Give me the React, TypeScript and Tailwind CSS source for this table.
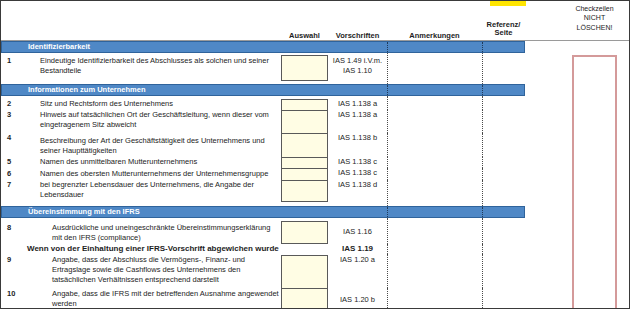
import React from 'react';

type Item = {
  num: string;
  lines: string[];
  ias: string[];
  row: string;
  numPt: string;
  textPt: string;
  iasPt: string;
  box: string;
  indent?: boolean;
};

const rowCols = 'grid grid-cols-[39px_241px_47px_59px_95px_43px]';

const identifizierbarkeit: Item[] = [
  {
    num: '1',
    lines: ['Eindeutige Identifizierbarkeit des Abschlusses als solchen und seiner', 'Bestandteile'],
    ias: ['IAS 1.49 i.V.m.', 'IAS 1.10'],
    row: 'h-[31px]',
    numPt: 'pt-[3px]',
    textPt: 'pt-[3px]',
    iasPt: 'pt-[3px]',
    box: 'mt-[2px] h-[26px] border',
  },
];

const unternehmen: Item[] = [
  {
    num: '2',
    lines: ['Sitz und Rechtsform des Unternehmens'],
    ias: ['IAS 1.138 a'],
    row: 'h-[14px]',
    numPt: 'pt-[3px]',
    textPt: 'pt-[3px]',
    iasPt: 'pt-[3px]',
    box: 'mt-[3px] h-[11px] border-x border-t',
  },
  {
    num: '3',
    lines: ['Hinweis auf tatsächlichen Ort der Geschäftsleitung, wenn dieser vom', 'eingetragenem Sitz abweicht'],
    ias: ['IAS 1.138 a'],
    row: 'h-[23px]',
    numPt: 'pt-[0px]',
    textPt: 'pt-[0px]',
    iasPt: 'pt-[0px]',
    box: 'h-[23px] border-x border-t',
  },
  {
    num: '4',
    lines: ['Beschreibung der Art der Geschäftstätigkeit des Unternehmens und', 'seiner Haupttätigkeiten'],
    ias: ['IAS 1.138 b'],
    row: 'h-[24px]',
    numPt: 'pt-[0px]',
    textPt: 'pt-[3px]',
    iasPt: 'pt-[0px]',
    box: 'h-[24px] border-x border-t',
  },
  {
    num: '5',
    lines: ['Namen des unmittelbaren Mutterunternehmens'],
    ias: ['IAS 1.138 c'],
    row: 'h-[11px]',
    numPt: 'pt-[0px]',
    textPt: 'pt-[0px]',
    iasPt: 'pt-[0px]',
    box: 'h-[11px] border-x border-t',
  },
  {
    num: '6',
    lines: ['Namen des obersten Mutterunternehmens der Unternehmensgruppe'],
    ias: ['IAS 1.138 c'],
    row: 'h-[12px]',
    numPt: 'pt-[1px]',
    textPt: 'pt-[1px]',
    iasPt: 'pt-[0px]',
    box: 'h-[12px] border-x border-t',
  },
  {
    num: '7',
    lines: ['bei begrenzter Lebensdauer des Unternehmens, die Angabe der', 'Lebensdauer'],
    ias: ['IAS 1.138 d'],
    row: 'h-[26px]',
    numPt: 'pt-[0px]',
    textPt: 'pt-[0px]',
    iasPt: 'pt-[0px]',
    box: 'h-[22px] border',
  },
];

const ifrs8: Item = {
  num: '8',
  lines: ['Ausdrückliche und uneingeschränkte Übereinstimmungserklärung', 'mit den IFRS (compliance)'],
  ias: ['IAS 1.16'],
  row: 'h-[26px]',
  numPt: 'pt-[5px]',
  textPt: 'pt-[5px]',
  iasPt: 'pt-[9px]',
  box: 'mt-[3px] h-[23px] border',
  indent: true,
};

const ifrsRest: Item[] = [
  {
    num: '9',
    lines: [
      'Angabe, dass der Abschluss die Vermögens-, Finanz- und',
      'Ertragslage sowie die Cashflows des Unternehmens den',
      'tatsächlichen Verhältnissen entsprechend darstellt',
    ],
    ias: ['IAS 1.20 a'],
    row: 'h-[34px]',
    numPt: 'pt-[1px]',
    textPt: 'pt-[1px]',
    iasPt: 'pt-[1px]',
    box: 'mt-[1px] h-[33px] border-x border-t',
    indent: true,
  },
  {
    num: '10',
    lines: ['Angabe, dass die IFRS mit der betreffenden Ausnahme angewendet', 'werden'],
    ias: ['IAS 1.20 b'],
    row: 'h-[22px]',
    numPt: 'pt-[1px]',
    textPt: 'pt-[1px] leading-[9.5px]',
    iasPt: 'pt-[7px]',
    box: 'h-[22px] border-x border-t',
    indent: true,
  },
];

const Dotted = () => <div className="border-l border-dotted border-[#4a4a4a]" />;

const ItemRow = ({ it }: { it: Item }) => (
  <div className={`${rowCols} ${it.row}`}>
    <div className={`pl-[6px] font-bold ${it.numPt}`}>{it.num}</div>
    <div className={`whitespace-nowrap ${it.indent ? 'pl-[12px]' : ''} ${it.textPt}`}>
      {it.lines.map((l) => (
        <div key={l}>{l}</div>
      ))}
    </div>
    <div>
      <div className={`bg-[#fffde4] border-[#595959] ${it.box}`} />
    </div>
    <div className={`text-center whitespace-nowrap ${it.iasPt}`}>
      {it.ias.map((l) => (
        <div key={l}>{l}</div>
      ))}
    </div>
    <Dotted />
    <Dotted />
  </div>
);

const Bar = ({ label }: { label: string }) => (
  <div className="flex h-[12px] bg-[#4f88c6] border border-[#2f639b] text-white font-bold">
    <div className="w-[385px] pl-[26px] leading-[10px]">{label}</div>
    <div className="w-[95px] border-l border-dotted border-[#1f3a5a]" />
    <div className="flex-1 border-l border-dotted border-[#1f3a5a]" />
  </div>
);

export default function App() {
  return (
    <div className="w-[630px] h-[309px] border border-[#3a3a3a] bg-white overflow-hidden flex flex-col text-[7.5px] leading-[10px] text-[#1d1d1d] font-['Liberation_Sans',Arial,sans-serif]">
      {/* KOPFZEILE */}
      <div className="grid grid-cols-[39px_241px_47px_59px_95px_43px_47px_45px_1fr] h-[40px] shrink-0 border-b border-[#9a9a9a] font-bold leading-[9px]">
        <div />
        <div />
        <div className="flex items-end justify-center">Auswahl</div>
        <div className="flex items-end justify-center">Vorschriften</div>
        <div className="flex items-end justify-center">Anmerkungen</div>
        <div className="flex flex-col leading-[8px] pb-[3px]">
          <div className="h-[5px] w-[36px] ml-[8px] shrink-0 bg-[#ffe500]" />
          <div className="mt-auto text-center">
            Referenz/
            <br />
            Seite
          </div>
        </div>
        <div />
        <div className="pt-[3px] text-center font-normal text-[7px] leading-[9.3px] text-[#222]">
          Checkzeilen
          <br />
          NICHT
          <br />
          LÖSCHEN!
        </div>
        <div />
      </div>

      <div className="flex flex-1">
        {/* TABELLE */}
        <div className="w-[524px] shrink-0 flex flex-col">
          <Bar label="Identifizierbarkeit" />
          {identifizierbarkeit.map((it) => (
            <ItemRow key={it.num} it={it} />
          ))}
          <Bar label="Informationen zum Unternehmen" />
          {unternehmen.map((it) => (
            <ItemRow key={it.num} it={it} />
          ))}
          <Bar label="Übereinstimmung mit den IFRS" />
          <ItemRow it={ifrs8} />
          <div className={`${rowCols} h-[10px] font-bold`}>
            <div className="col-span-2 pl-[26px] whitespace-nowrap text-[8px]">
              Wenn von der Einhaltung einer IFRS-Vorschrift abgewichen wurde
            </div>
            <div />
            <div className="text-center text-[8px]">IAS 1.19</div>
            <Dotted />
            <Dotted />
          </div>
          {ifrsRest.map((it) => (
            <ItemRow key={it.num} it={it} />
          ))}
        </div>

        {/* CHECKZEILEN */}
        <div className="flex-1 flex flex-col">
          <div className="ml-[47px] mt-[14px] w-[45px] flex-1 border-x-2 border-t-2 border-[#d49a9a]" />
        </div>
      </div>
    </div>
  );
}
